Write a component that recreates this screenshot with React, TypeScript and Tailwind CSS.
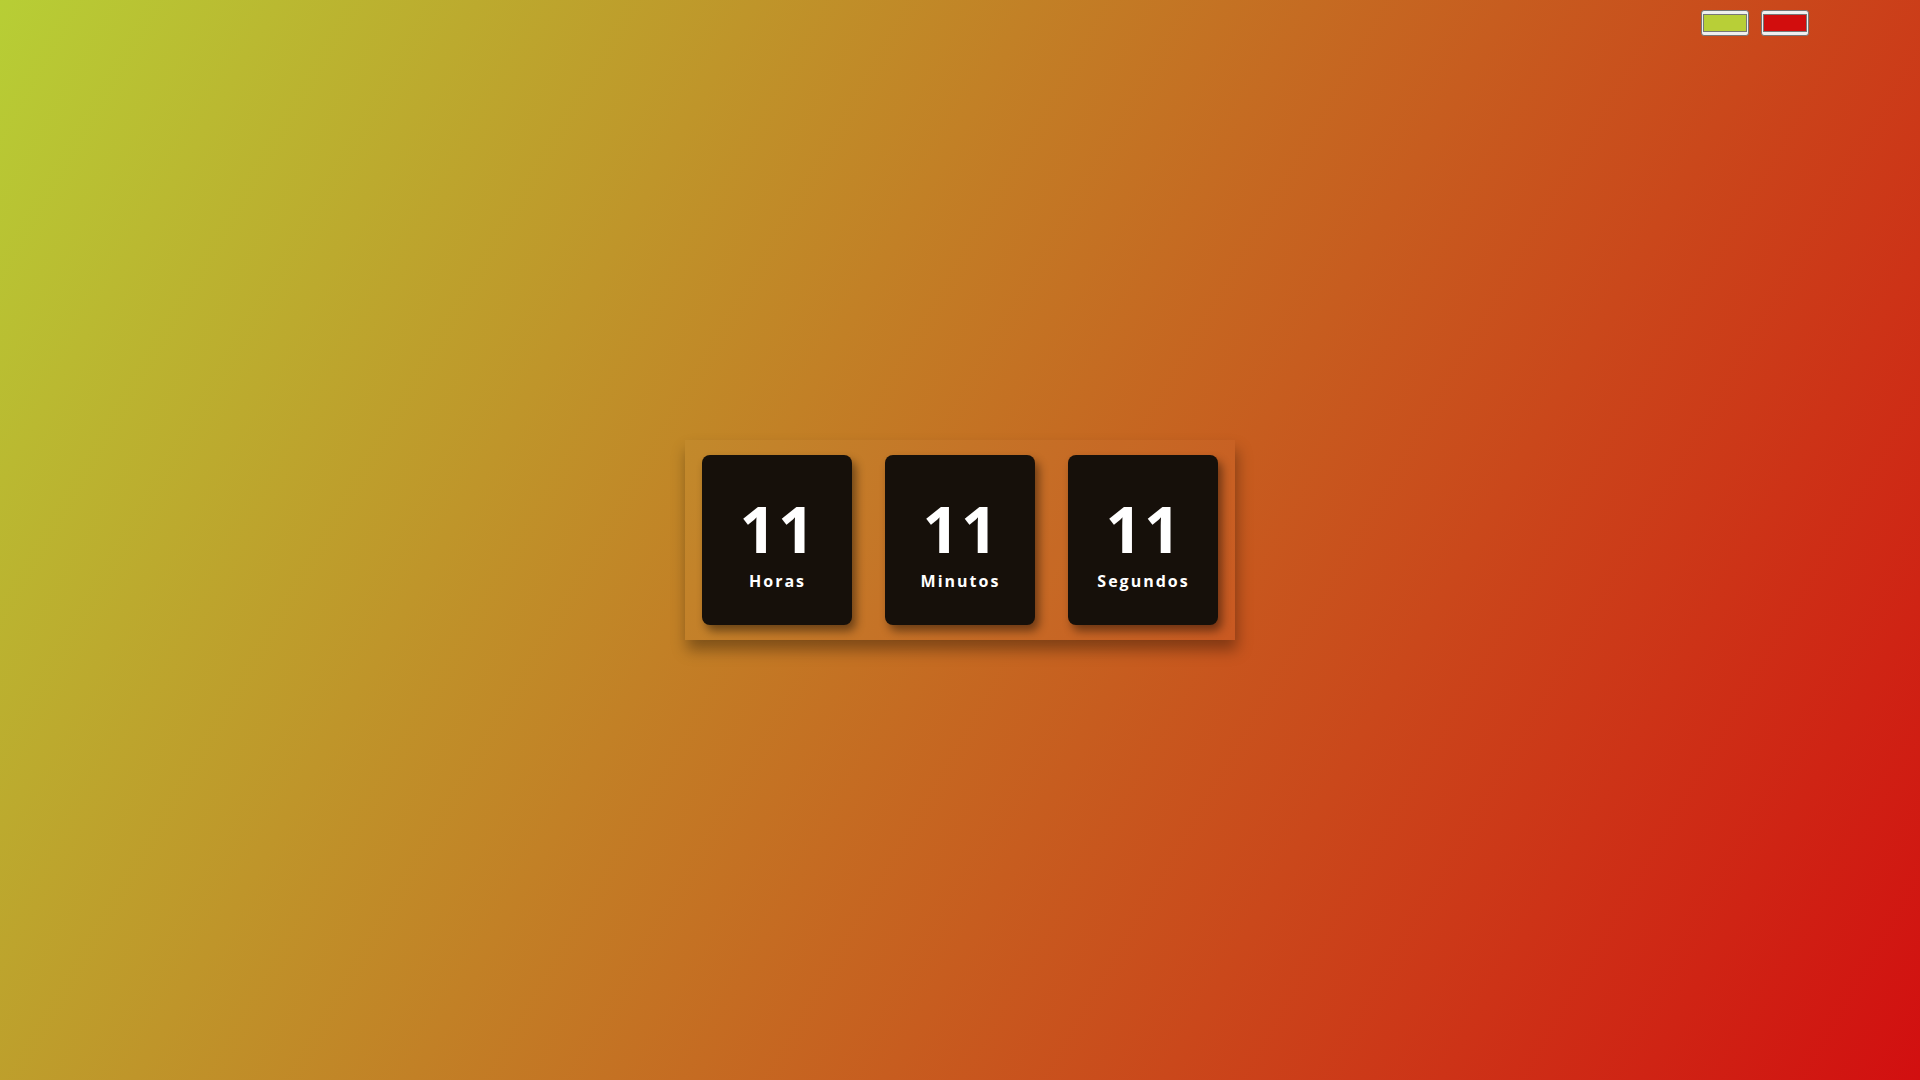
import React from "react";

function Swatch({ color }: { color: string }) {
  return (
    <div className="w-[48px] h-[26px] border border-[#767676] rounded-[3px] bg-[#efefef] px-[1px] py-[3px]">
      <div className="h-full w-full border border-[#777777]" style={{ backgroundColor: color }} />
    </div>
  );
}

function Card({ value, label }: { value: string; label: string }) {
  return (
    <div className="w-[150px] h-[170px] rounded-[8px] bg-[#16100a] shadow-[4px_6px_10px_rgba(0,0,0,0.45)] flex flex-col items-center pt-[42px] text-white">
      <div className="text-[64px] leading-[64px] font-bold tracking-[2px] pl-[2px]">{value}</div>
      <div className="mt-[8px] text-[16px] leading-[24px] font-bold tracking-[2px] pl-[1px]">{label}</div>
    </div>
  );
}

export default function App() {
  return (
    <div
      className="relative w-full min-h-screen h-[1080px] bg-[linear-gradient(120deg,#b7ce35,#d20f10)] flex items-center justify-center"
      style={{ fontFamily: '"Open Sans", "Noto Sans", sans-serif' }}
    >
      <div className="absolute top-[10px] right-[111px] flex gap-[12px]">
        <Swatch color="#b8cf37" />
        <Swatch color="#d20d0d" />
      </div>
      <div className="w-[550px] h-[200px] flex items-center justify-center gap-[33px] shadow-[2px_10px_14px_rgba(0,0,0,0.35)] bg-white/[0.02]">
        <Card value="11" label="Horas" />
        <Card value="11" label="Minutos" />
        <Card value="11" label="Segundos" />
      </div>
    </div>
  );
}
